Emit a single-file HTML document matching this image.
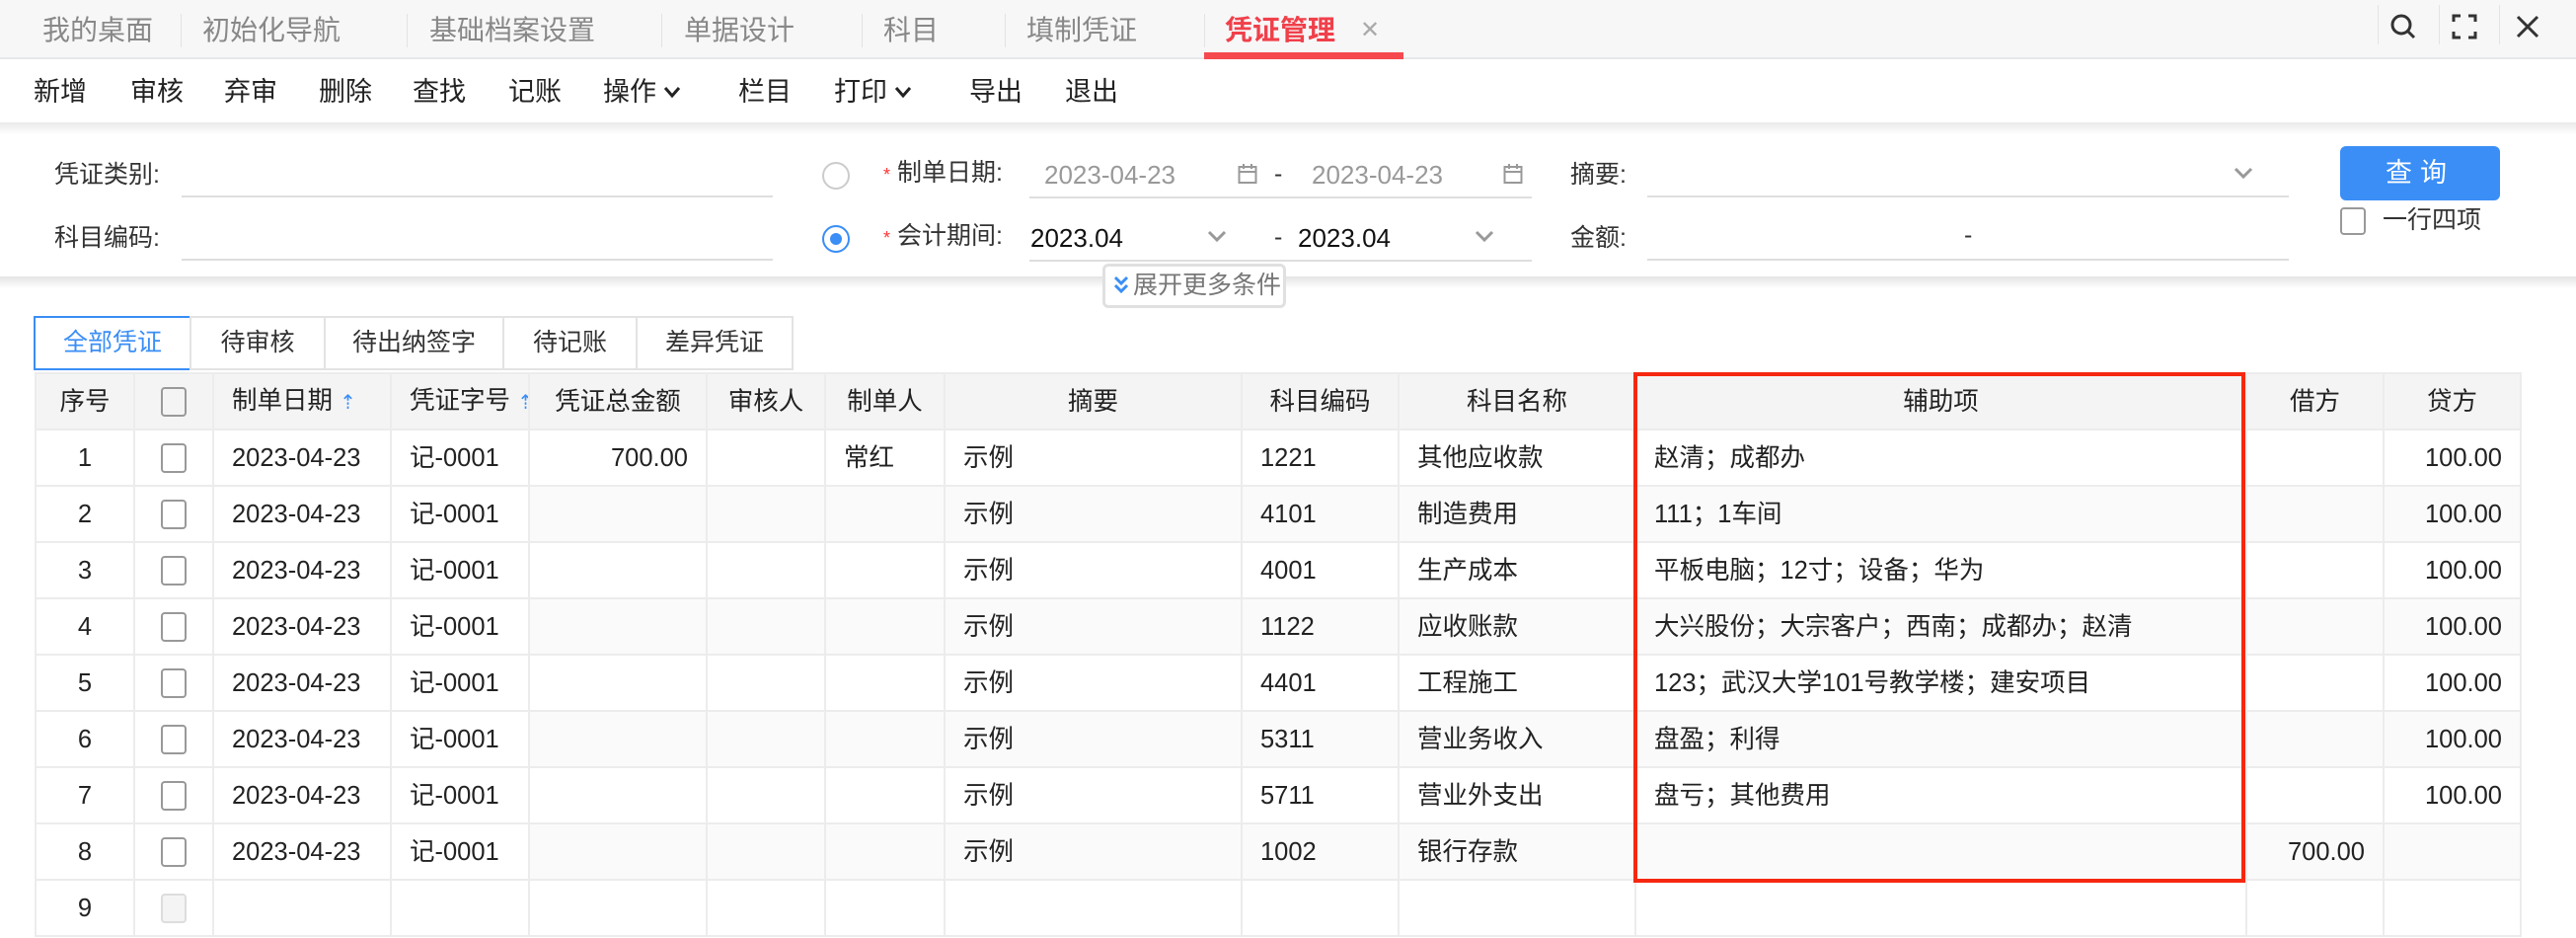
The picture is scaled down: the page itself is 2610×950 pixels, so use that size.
<!DOCTYPE html>
<html><head><meta charset="utf-8">
<style>
*{margin:0;padding:0;box-sizing:border-box}
body{width:2610px;height:950px;overflow:hidden;background:#fff;font-family:"Liberation Sans","Noto Sans CJK SC",sans-serif;color:#222;position:relative}
.a{position:absolute;white-space:nowrap}
.tb{position:absolute;left:0;top:0;width:2610px;height:60px;background:#f7f7f8;border-bottom:2px solid #e6e8eb}
.tab{position:absolute;top:12px;font-size:28px;color:#888;line-height:38px}
.sep{position:absolute;top:14px;width:1px;height:34px;background:#e3e3e3}
.tool{position:absolute;top:75px;font-size:27px;line-height:36px;color:#222}
.lbl{position:absolute;font-size:25px;color:#333;line-height:30px}
.ul{position:absolute;height:2px;background:#dedede}
.stab{position:absolute;top:320px;height:55px;border:2px solid #e3e3e3;font-size:25px;line-height:51px;text-align:center;color:#333;background:#fff}
table{position:absolute;left:35px;top:377px;width:2518px;border-collapse:collapse;table-layout:fixed;font-size:25.5px}
td,th{border:2px solid #ececec;height:57px;padding:0 18px;white-space:nowrap;overflow:hidden;line-height:28px;vertical-align:middle}
th{background:#f4f4f4;font-weight:normal;color:#222;text-align:center}
td{color:#222}
tr.s td.g{background:#fafafa}
.c{text-align:center}.r{text-align:right}
.cb{display:inline-block;width:26px;height:30px;border:2px solid #999;border-radius:4px;vertical-align:middle}
</style></head><body>
<div class="tb"></div>
<div class="tab" style="left:43px">我的桌面</div><div class="sep" style="left:183px"></div>
<div class="tab" style="left:205px">初始化导航</div><div class="sep" style="left:412px"></div>
<div class="tab" style="left:435px">基础档案设置</div><div class="sep" style="left:670px"></div>
<div class="tab" style="left:693px">单据设计</div><div class="sep" style="left:873px"></div>
<div class="tab" style="left:895px">科目</div><div class="sep" style="left:1018px"></div>
<div class="tab" style="left:1040px">填制凭证</div><div class="sep" style="left:1220px"></div>
<div class="tab" style="left:1241px;color:#f0404a;font-weight:bold">凭证管理</div>
<div class="tab" style="left:1378px;color:#aaa;font-size:24px">✕</div>
<div class="a" style="left:1220px;top:53px;width:202px;height:7px;background:#f5484f"></div>
<div class="sep" style="left:2409px;height:40px;top:5px"></div><div class="sep" style="left:2471px;height:40px;top:5px"></div><div class="sep" style="left:2532px;height:40px;top:5px"></div>
<svg class="a" style="left:2420px;top:12px" width="32" height="30" viewBox="0 0 32 30"><circle cx="13" cy="13" r="9" fill="none" stroke="#333" stroke-width="3"/><path d="M20 20l6 6" stroke="#333" stroke-width="3"/></svg>
<svg class="a" style="left:2484px;top:13px" width="26" height="28" viewBox="0 0 26 28"><path d="M2 9V3h7M17 3h7v6M24 19v6h-7M9 25H2v-6" fill="none" stroke="#333" stroke-width="3"/></svg>
<svg class="a" style="left:2548px;top:14px" width="26" height="26" viewBox="0 0 26 26"><path d="M3 3l20 20M23 3L3 23" stroke="#333" stroke-width="3"/></svg>

<div class="tool" style="left:34px">新增</div><div class="tool" style="left:132px">审核</div><div class="tool" style="left:227px">弃审</div><div class="tool" style="left:323px">删除</div><div class="tool" style="left:418px">查找</div><div class="tool" style="left:515px">记账</div><div class="tool" style="left:611px">操作</div><div class="tool" style="left:748px">栏目</div><div class="tool" style="left:845px">打印</div><div class="tool" style="left:982px">导出</div><div class="tool" style="left:1079px">退出</div>
<svg class="a" style="left:672px;top:86px" width="18" height="14"><path d="M2 3l7 8 7-8" fill="none" stroke="#222" stroke-width="3"/></svg>
<svg class="a" style="left:906px;top:86px" width="18" height="14"><path d="M2 3l7 8 7-8" fill="none" stroke="#222" stroke-width="3"/></svg>
<div class="a" style="left:0;top:124px;width:2610px;height:12px;background:linear-gradient(#e9e9e9,#fff)"></div>

<div class="lbl" style="left:55px;top:162px">凭证类别:</div><div class="ul" style="left:184px;top:198px;width:599px"></div>
<div class="lbl" style="left:55px;top:226px">科目编码:</div><div class="ul" style="left:184px;top:262px;width:599px"></div>
<div class="a" style="left:833px;top:164px;width:28px;height:28px;border:2px solid #ccc;border-radius:50%"></div>
<div class="a" style="left:833px;top:228px;width:28px;height:28px;border:2px solid #3a8ef6;border-radius:50%"><div style="margin:6px;width:12px;height:12px;border-radius:50%;background:#3a8ef6"></div></div>
<div class="lbl" style="left:895px;top:160px"><span style="color:#f33;font-size:18px">*</span> 制单日期:</div>
<div class="lbl" style="left:895px;top:224px"><span style="color:#f33;font-size:18px">*</span> 会计期间:</div>
<div class="lbl" style="left:1058px;top:162px;color:#999;font-size:26px">2023-04-23</div>
<div class="lbl" style="left:1329px;top:162px;color:#999;font-size:26px">2023-04-23</div>
<div class="lbl" style="left:1291px;top:161px">-</div><div class="lbl" style="left:1291px;top:225px">-</div>
<svg class="a" style="left:1254px;top:165px" width="20" height="22"><rect x="1.5" y="4" width="17" height="16" fill="none" stroke="#999" stroke-width="2"/><path d="M1.5 9h17M6 1v5M14 1v5" stroke="#999" stroke-width="2"/></svg>
<svg class="a" style="left:1523px;top:165px" width="20" height="22"><rect x="1.5" y="4" width="17" height="16" fill="none" stroke="#999" stroke-width="2"/><path d="M1.5 9h17M6 1v5M14 1v5" stroke="#999" stroke-width="2"/></svg>
<div class="ul" style="left:1043px;top:199px;width:509px"></div>
<div class="lbl" style="left:1044px;top:226px;color:#111;font-size:26px">2023.04</div>
<div class="lbl" style="left:1315px;top:226px;color:#111;font-size:26px">2023.04</div>
<svg class="a" style="left:1223px;top:232px" width="20" height="14"><path d="M2 3l8 8 8-8" fill="none" stroke="#999" stroke-width="3"/></svg>
<svg class="a" style="left:1494px;top:232px" width="20" height="14"><path d="M2 3l8 8 8-8" fill="none" stroke="#999" stroke-width="3"/></svg>
<div class="ul" style="left:1043px;top:263px;width:509px"></div>
<div class="lbl" style="left:1591px;top:162px">摘要:</div><div class="ul" style="left:1669px;top:198px;width:650px"></div>
<svg class="a" style="left:2263px;top:168px" width="20" height="14"><path d="M2 3l8 8 8-8" fill="none" stroke="#999" stroke-width="3"/></svg>
<div class="lbl" style="left:1591px;top:226px">金额:</div><div class="ul" style="left:1669px;top:262px;width:650px"></div>
<div class="lbl" style="left:1990px;top:223px">-</div>
<div class="a" style="left:2371px;top:148px;width:162px;height:55px;background:#3a8ef6;border-radius:6px;color:#fff;font-size:27px;line-height:55px;text-align:center;letter-spacing:8px">查询</div>
<div class="a" style="left:2371px;top:210px;width:26px;height:28px;border:2px solid #999;border-radius:4px"></div>
<div class="lbl" style="left:2414px;top:208px">一行四项</div>
<div class="a" style="left:0;top:280px;width:2610px;height:12px;background:linear-gradient(#e4e4e4,#fff)"></div>
<div class="a" style="left:1117px;top:267px;width:186px;height:45px;border:3px solid #e0e0e0;border-radius:6px;background:#fff;font-size:25px;line-height:38px;color:#777;padding-left:28px">展开更多条件</div>
<svg class="a" style="left:1128px;top:278px" width="16" height="22"><path d="M2 3l6 6 6-6M2 11l6 6 6-6" fill="none" stroke="#3a8ef6" stroke-width="3"/></svg>

<div class="stab" style="left:34px;width:160px;border-color:#3a8ef6;color:#3a8ef6">全部凭证</div>
<div class="stab" style="left:192px;width:138px">待审核</div>
<div class="stab" style="left:328px;width:183px">待出纳签字</div>
<div class="stab" style="left:509px;width:137px">待记账</div>
<div class="stab" style="left:644px;width:160px">差异凭证</div>

<table>
<tr><th style="width:100px">序号</th><th style="width:80px"><span class="cb"></span></th><th style="width:180px;text-align:left">制单日期 <span style="color:#3a8ef6;font-size:20px">⇡</span></th><th style="width:140px;text-align:left;padding-right:0">凭证字号 <span style="color:#3a8ef6;font-size:20px">⇡</span></th><th style="width:180px;padding:0">凭证总金额</th><th style="width:120px;padding:0">审核人</th><th style="width:121px;padding:0">制单人</th><th style="width:301px">摘要</th><th style="width:159px">科目编码</th><th style="width:240px">科目名称</th><th style="width:619px">辅助项</th><th style="width:139px">借方</th><th style="width:139px">贷方</th></tr>
<tr><td class="c">1</td><td class="c"><span class="cb"></span></td><td>2023-04-23</td><td>记-0001</td><td class="r g">700.00</td><td class="g"></td><td class="g">常红</td><td class="g">示例</td><td class="g">1221</td><td class="g">其他应收款</td><td class="g">赵清；成都办</td><td class="g"></td><td class="r g">100.00</td></tr>
<tr class="s"><td class="c">2</td><td class="c"><span class="cb"></span></td><td>2023-04-23</td><td>记-0001</td><td class="g"></td><td class="g"></td><td class="g"></td><td class="g">示例</td><td class="g">4101</td><td class="g">制造费用</td><td class="g">111；1车间</td><td class="g"></td><td class="r g">100.00</td></tr>
<tr><td class="c">3</td><td class="c"><span class="cb"></span></td><td>2023-04-23</td><td>记-0001</td><td></td><td></td><td></td><td>示例</td><td>4001</td><td>生产成本</td><td>平板电脑；12寸；设备；华为</td><td></td><td class="r">100.00</td></tr>
<tr class="s"><td class="c">4</td><td class="c"><span class="cb"></span></td><td>2023-04-23</td><td>记-0001</td><td class="g"></td><td class="g"></td><td class="g"></td><td class="g">示例</td><td class="g">1122</td><td class="g">应收账款</td><td class="g">大兴股份；大宗客户；西南；成都办；赵清</td><td class="g"></td><td class="r g">100.00</td></tr>
<tr><td class="c">5</td><td class="c"><span class="cb"></span></td><td>2023-04-23</td><td>记-0001</td><td></td><td></td><td></td><td>示例</td><td>4401</td><td>工程施工</td><td>123；武汉大学101号教学楼；建安项目</td><td></td><td class="r">100.00</td></tr>
<tr class="s"><td class="c">6</td><td class="c"><span class="cb"></span></td><td>2023-04-23</td><td>记-0001</td><td class="g"></td><td class="g"></td><td class="g"></td><td class="g">示例</td><td class="g">5311</td><td class="g">营业务收入</td><td class="g">盘盈；利得</td><td class="g"></td><td class="r g">100.00</td></tr>
<tr><td class="c">7</td><td class="c"><span class="cb"></span></td><td>2023-04-23</td><td>记-0001</td><td></td><td></td><td></td><td>示例</td><td>5711</td><td>营业外支出</td><td>盘亏；其他费用</td><td></td><td class="r">100.00</td></tr>
<tr class="s"><td class="c">8</td><td class="c"><span class="cb"></span></td><td>2023-04-23</td><td>记-0001</td><td class="g"></td><td class="g"></td><td class="g"></td><td class="g">示例</td><td class="g">1002</td><td class="g">银行存款</td><td class="g"></td><td class="r g">700.00</td><td class="g"></td></tr>
<tr><td class="c">9</td><td class="c"><span class="cb" style="border-color:#ddd;background:#f4f4f4"></span></td><td></td><td></td><td></td><td></td><td></td><td></td><td></td><td></td><td></td><td></td><td></td></tr>
</table>
<div class="a" style="left:1655px;top:377px;width:620px;height:517px;border:4px solid #f5280f"></div>
</body></html>
